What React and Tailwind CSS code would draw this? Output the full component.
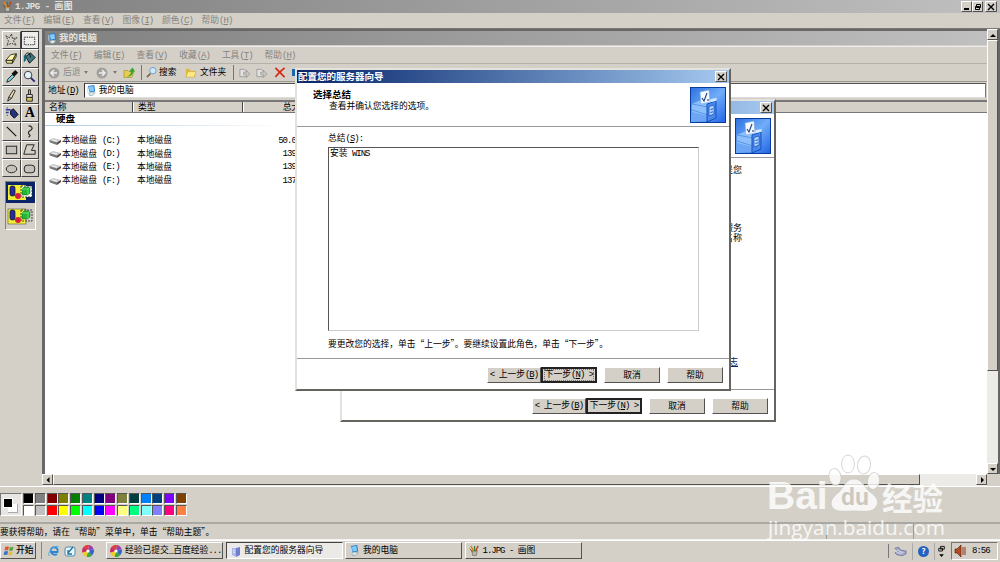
import { Fragment } from "react";
import clsx from "clsx";

const paintMenu = ["文件(&F)", "编辑(&E)", "查看(&V)", "图像(&I)", "颜色(&C)", "帮助(&H)"];
const explorerMenu = ["文件(&F)", "编辑(&E)", "查看(&V)", "收藏(&A)", "工具(&T)", "帮助(&H)"];

const statusText = "要获得帮助\uff0c请在“帮助”菜单中\uff0c单击“帮助主题”。";
const wizardHint = "要更改您的选择\uff0c单击“上一步”。要继续设置此角色\uff0c单击“下一步”。";

const drives = [
    { name: "本地磁盘", letter: "(C:)", size: "50.0 GB" },
    { name: "本地磁盘", letter: "(D:)", size: "139 GB" },
    { name: "本地磁盘", letter: "(E:)", size: "139 GB" },
    { name: "本地磁盘", letter: "(F:)", size: "137 GB" },
];

const swatches = [
    ["#000000", "#808080", "#800000", "#808000", "#008000", "#008080", "#000080", "#800080", "#808040", "#004040", "#0080ff", "#004080", "#8000ff", "#804000"],
    ["#ffffff", "#c0c0c0", "#ff0000", "#ffff00", "#00ff00", "#00ffff", "#0000ff", "#ff00ff", "#ffff80", "#00ff80", "#80ffff", "#8080ff", "#ff0080", "#ff8040"],
];

const raised = "bg-[#d4d0c8] border border-t-white border-l-white border-r-[#55534f] border-b-[#55534f]";

// Latin runs are set in half-width mono, "&" underlines the next letter
const Text = ({ children, className }) => (
    <span className={clsx("whitespace-pre", className)}>
        {children.split(/([\x20-\x7e]+)/).map((part, i) => {
            if (i % 2 === 0) return <Fragment key={i}>{part}</Fragment>;
            const [before, after] = part.split("&");
            return (
                <span key={i} className="font-['Liberation_Mono'] text-[9px] tracking-[-1px]">
                    {before}
                    {after && <><span className="underline">{after[0]}</span>{after.slice(1)}</>}
                </span>
            );
        })}
    </span>
);

const ComputerIcon = ({ className }) => (
    <svg viewBox="0 0 12 12" className={clsx("h-[11px] w-[11px] shrink-0", className)}>
        <path d="M2 1l7-1 1 7-6 1z" fill="#287bd0" />
        <path d="M3 2l5-.8.8 5-4.6.8z" fill="#83ccf7" />
        <path d="M3 9l3-1.5 4 1L7 11.5H4z" fill="#d8e4ee" stroke="#688" strokeWidth=".5" />
        <path d="M2 2v6l2 2" stroke="#bcd9f0" fill="none" />
    </svg>
);

const PaintIcon = ({ className }) => (
    <svg viewBox="0 0 12 12" className={clsx("h-[11px] w-[11px] shrink-0", className)}>
        <path d="M3 6h6l-1 5.5H4z" fill="#b9b8aa" stroke="#555" strokeWidth=".6" />
        <path d="M2 1l3 6" stroke="#d68c18" strokeWidth="1.6" />
        <path d="M6 1v6" stroke="#328449" strokeWidth="1.4" />
        <path d="M10 1L7 7" stroke="#c04525" strokeWidth="1.6" />
        <path d="M1 4l3 4" stroke="#815013" />
    </svg>
);

const ServerIcon = () => (
    <svg viewBox="0 0 12 12" className="h-[12px] w-[12px] shrink-0">
        <path d="M2 3l4-2 4 1v8l-3 2-5-2z" fill="#e4e9fb" />
        <path d="M6 3l4-1v8l-4 2z" fill="#6f7fc9" />
        <path d="M2 3l4 0v9l-4-2z" fill="#aab6ea" />
        <path d="M3 5l2 .4M3 7l2 .4" stroke="#fff" strokeWidth=".7" />
    </svg>
);

const WizardIcon = () => (
    <svg viewBox="0 0 36 36" className="h-9 w-9 shrink-0">
        <defs>
            <linearGradient id="wiz" x1="0" y1="0" x2="1" y2="1">
                <stop offset="0" stopColor="#2c70e0" />
                <stop offset=".5" stopColor="#70adf8" />
                <stop offset="1" stopColor="#2163e6" />
            </linearGradient>
        </defs>
        <rect x=".5" y=".5" width="35" height="35" fill="url(#wiz)" stroke="#073b9c" />
        <path d="M2 17l9-4 10 1-3 4v15L2 29z" fill="#8dbffa" />
        <path d="M2 25l16 4v5H2z" fill="#6ca6f4" />
        <path d="M2 23l16 5M2 17l16 3" stroke="#4a8be8" strokeWidth=".8" fill="none" />
        <path d="M17 17l9-3v17l-9 4z" fill="#4a88ea" stroke="#1250bd" />
        <path d="M17 16l4-4 6-1-1 3z" fill="#d5e9ff" />
        <path d="M19 19.500l5-1.500v9L19 29z" fill="#b4d7ff" stroke="#1a56c4" strokeWidth=".8" />
        <path d="M20.500 22.500l2.500-.7M20.500 25.500l2.500-.7" stroke="#1a56c4" />
        <path d="M10 5l9-2 1 12-9 2z" fill="#f4faff" stroke="#79a9e4" strokeWidth=".6" />
        <path d="M12 11l2 3 3-8M18 12v2" stroke="#24407b" strokeWidth="1.100" fill="none" />
    </svg>
);

const PinwheelIcon = () => (
    <svg viewBox="0 0 12 12" className="h-[12px] w-[12px] shrink-0">
        <path d="M6 6L2 1.500A6 6 0 0 1 7 0z" fill="#e83a30" />
        <path d="M6 6L7 0a6 6 0 0 1 4.500 4z" fill="#9b3fb0" />
        <path d="M6 6l5.500-2A6 6 0 0 1 10 10.500z" fill="#3563c8" />
        <path d="M6 6l4 4.500A6 6 0 0 1 4.500 12z" fill="#37a84a" />
        <path d="M6 6l-1.500 6A6 6 0 0 1 .3 7.500z" fill="#f0cc2a" />
        <path d="M6 6L.3 7.500A6 6 0 0 1 2 1.500z" fill="#c72b58" />
        <circle cx="6" cy="6" r="1.600" fill="#fff" />
    </svg>
);

const DriveIcon = () => (
    <svg viewBox="0 0 12 8" className="h-2 w-3 shrink-0">
        <path d="M0 3l4-2 8 2-4 3z" fill="#c9c9c9" />
        <path d="M0 3l8 2.500V8L1 5.500z" fill="#777" />
        <path d="M8 5.500L12 3v2L8 8z" fill="#4c4c4c" />
        <path d="M3 3l5 1" stroke="#fff" strokeWidth=".8" />
    </svg>
);

const CloseButton = () => (
    <div className={clsx("flex h-[11px] w-[12px] items-center justify-center", raised)}>
        <svg viewBox="0 0 8 8" className="h-[8px] w-[8px]"><path d="M1 1l6 6M7 1L1 7" stroke="#000" strokeWidth="1.400" /></svg>
    </div>
);

const Arrow = ({ dir }) => {
    const paths = { up: "M1 6h6L4 3z", down: "M1 3h6L4 6z", left: "M5.500 1v6L2.500 4z", right: "M3 1v6l3-3z" };
    return (
        <div className={clsx("flex h-[11px] w-[11px] shrink-0 items-center justify-center", raised)}>
            <svg viewBox="0 0 8 8" className="h-2 w-2 shrink-0"><path d={paths[dir]} /></svg>
        </div>
    );
};

const toolIcons = [
    <path key="0" d="M3 4l4 2 2-4 1 5 5-1-4 3 3 5-5-2-5 2 2-4z" fill="none" stroke="#333" strokeDasharray="2 1" />,
    <rect key="1" x="3.500" y="5.500" width="11" height="8" fill="none" stroke="#222" strokeDasharray="1.500 1" />,
    <g key="2" stroke="#222" strokeWidth=".9"><path d="M3 11l5-6 6-1-4 7z" fill="#fff9a8" /><path d="M3 11h7v3H4z" fill="#eadf78" /><path d="M10 11l4-7v3l-4 7z" fill="#c7b83d" /></g>,
    <g key="3"><path d="M5 7l5-4 5 5-6 6z" fill="#3f7880" stroke="#111" /><path d="M4 8c0-6 6-7 6 0" fill="none" stroke="#111" /><path d="M3 6l3-1-1 6-2 2z" fill="#126878" /></g>,
    <g key="4"><path d="M4 15l1-3 5-5 2 2-5 5z" fill="#7fd8dd" stroke="#222" /><path d="M9 6l4-4 3 3-4 4z" fill="#111" /></g>,
    <g key="5"><circle cx="7.500" cy="7.500" r="4" fill="#e3f0f4" stroke="#334" /><path d="M10.500 10.500l4 4" stroke="#222a78" strokeWidth="2" /></g>,
    <path key="6" d="M5 15l1-4 5-8 2 1-4 8zM6 11l3 1" fill="#f3dfad" stroke="#222" />,
    <g key="7" stroke="#222"><path d="M8 3h2v5H8z" fill="#e0cf62" /><path d="M6 8h6v3H6z" fill="#eee" /><path d="M6 11h6v4H6z" fill="#d9c75b" /></g>,
    <g key="8"><path d="M8 6l3-2 5 6-4 4-4-4z" fill="#23357c" stroke="#111" /><path d="M3 5h5M3 8h3M4 11h1M4 3h1" stroke="#2838a8" strokeWidth="1.500" /></g>,
    null,
    <path key="10" d="M4 4l10 10" stroke="#111" strokeWidth="1.200" />,
    <path key="11" d="M8 3c3 0 5 2 3 4S7 9 8 11s3 2 0 4" stroke="#222" fill="none" strokeWidth="1.200" />,
    <rect key="12" x="3.500" y="5.500" width="11" height="8" fill="#c3c1ba" stroke="#222" />,
    <path key="13" d="M3 14l3-10h8l-3 6h4v4z" fill="#d4d0c8" stroke="#222" />,
    <ellipse key="14" cx="9" cy="9.500" rx="5.500" ry="4" fill="#c3c1ba" stroke="#222" />,
    <rect key="15" x="3.500" y="5.500" width="11" height="8" rx="3" fill="#c3c1ba" stroke="#222" />,
];

const ShapesIcon = ({ transparent }) => (
    <svg viewBox="0 0 28 20" className="h-5 w-7">
        <rect x="2" y="3" width="18" height="15" fill="#f4ef35" stroke={transparent ? "#555" : "none"} strokeWidth=".6" />
        <rect x="15" y="4" width="11" height="11" fill={transparent ? "none" : "#f7fff2"} stroke="#222" strokeDasharray="2 1" strokeWidth=".8" />
        <rect x="4" y="4" width="5" height="10" rx="2" fill="#252c9b" stroke="#111" strokeWidth=".7" />
        <path d="M16 7l2-2h6v6l-2 2h-6z" fill="#22b738" stroke="#064b14" strokeWidth=".4" />
        <path d="M16 7h6v6M22 7l2-2" fill="none" stroke="#7df385" strokeWidth=".7" />
        <circle cx="12" cy="14" r="3" fill="#d5213d" />
    </svg>
);

const Toolbox = () => (
    <div className="flex w-[42px] shrink-0 flex-col pt-[2px] pl-[2px]">
        <div className="grid w-[37px] grid-cols-2">
            {toolIcons.map((icon, i) => (
                <div key={i} className={clsx("flex h-[18.3px] items-center justify-center border border-r-[#444] border-b-[#444]", i === 1 ? "border-t-[#333] border-l-[#333] bg-[#efede9]" : "border-t-white border-l-white")}>
                    {i === 9
                        ? <span className="font-['Liberation_Serif'] text-[14px] leading-none font-bold">A</span>
                        : <svg viewBox="0 0 18 18" className="h-[17px] w-[17px] shrink-0">{icon}</svg>}
                </div>
            ))}
        </div>
        <div className="mt-[4px] ml-[3px] flex w-[31px] flex-col items-center border border-t-[#808080] border-l-[#808080] border-r-white border-b-white">
            <div className="h-[21px] w-[29px] bg-[#0a246a]"><ShapesIcon /></div>
            <div className="mt-[3px] h-[23px] w-[29px]"><ShapesIcon transparent /></div>
        </div>
    </div>
);

const ToolDivider = () => <div className="h-[15px] w-px bg-[#77756f]" />;

const NavIcon = ({ flip }) => (
    <svg viewBox="0 0 12 12" className={clsx("h-[12px] w-[12px] shrink-0", flip && "-scale-x-100")}>
        <circle cx="6" cy="6" r="5.500" fill="#a3a19d" /><path d="M9 6H3.500M6 3L3 6l3 3" stroke="#eee" strokeWidth="1.500" fill="none" />
    </svg>
);

const SmallCaret = () => <svg viewBox="0 0 5 4" className="h-[3px] w-[4px] shrink-0"><path d="M0 0h5L2.500 4z" fill="#777" /></svg>;

const ExplorerToolbar = () => (
    <div className="flex h-[18px] items-center border-b border-[#9a9892] pl-[3px]">
        <div className="flex w-[43px] items-center gap-[3px]"><NavIcon /><Text className="text-[#8d8b86]">后退</Text><SmallCaret /></div>
        <div className="ml-[5px] flex w-[28px] items-center gap-[5px]"><NavIcon flip /><SmallCaret /></div>
        <svg viewBox="0 0 12 12" className="-ml-px h-[13px] w-[12px] shrink-0">
            <path d="M1 4h4l1 1h5l-2 6H1z" fill="#e6cd52" stroke="#a2892c" strokeWidth=".6" /><path d="M4 10c3-1 4-3 4-5H6l3.500-4L12 5h-2c0 3-2 5-6 5z" fill="#36a32d" />
        </svg>
        <div className="ml-[6px] flex w-[42px] items-center gap-[4px]">
            <ToolDivider />
            <svg viewBox="0 0 12 12" className="h-[13px] w-[11px] shrink-0"><path d="M1 11l4-4" stroke="#86623c" strokeWidth="1.700" /><circle cx="7.500" cy="4" r="3.500" fill="#d0eafa" stroke="#6799c4" /></svg>
            <Text className="-ml-[2px]">搜索</Text>
        </div>
        <div className="ml-[2px] flex w-[43px] items-center gap-[3px]">
            <svg viewBox="0 0 13 12" className="h-[11px] w-[12px] shrink-0"><path d="M1 2h4l1 2h5v7H1z" fill="#dfb941" /><path d="M3 5h9l-2 6H1z" fill="#ffe985" stroke="#b99731" strokeWidth=".5" /></svg>
            <Text>文件夹</Text>
        </div>
        <div className="ml-[5px] flex items-center">
            <ToolDivider />
            {[0, 1].map((n) => (
                <svg key={n} viewBox="0 0 13 12" className="ml-[5px] h-[12px] w-[12px] shrink-0"><path d="M1 2h5l2 2v6H1z" fill="#e5e3df" stroke="#999" /><path d="M5 5h3V3l4 4-4 4V8H5z" fill="#c6c4c0" stroke="#999" strokeWidth=".8" /></svg>
            ))}
            <svg viewBox="0 0 12 12" className="ml-[6px] h-[11px] w-[12px] shrink-0"><path d="M1 1l10 10M11 1C7 4 4 7 1 11" stroke="#d42b16" strokeWidth="1.900" /></svg>
            <div className="ml-[6px] h-[7px] w-[5px] bg-[#1d65ac]" />
        </div>
    </div>
);

const Explorer = () => (
    <div className="flex min-w-0 flex-1 flex-col overflow-hidden border-t-2 border-l-[3px] border-[#686868] bg-[#d4d0c8]">
        <div className="flex h-[14px] shrink-0 items-center gap-[1px] bg-linear-to-r from-[#808080] to-[#c0c0c0] pl-[2px]">
            <ComputerIcon />
            <Text className="text-[9.500px] font-bold text-[#e4e2de]">我的电脑</Text>
        </div>
        <div className="mt-px flex h-[18px] shrink-0 items-center gap-[12px] border-t border-b border-t-[#eee] border-b-[#b5b2ab] pt-px pl-[6px] text-[#85837e]">
            {explorerMenu.map((label) => <Text key={label}>{label}</Text>)}
        </div>
        <ExplorerToolbar />
        <div className="flex h-[17px] shrink-0 items-center pr-[1px] pl-[3px]">
            <Text>地址(&D)</Text>
            <div className="ml-[5px] flex h-[15px] flex-1 items-center gap-[2px] border border-t-[#555] border-l-[#333] border-r-[#777] border-b-[#ddd] bg-white pl-[1px]">
                <ComputerIcon />
                <Text>我的电脑</Text>
            </div>
        </div>
        <div className="mt-px flex h-[13px] shrink-0 items-center border-t-2 border-b border-t-[#777] border-b-[#777]">
            <div className="flex h-full w-[88px] items-center border-r border-[#444] pl-[4px]"><Text>名称</Text></div>
            <div className="flex h-full w-[110px] items-center border-r border-l border-r-[#444] border-l-white pl-[4px]"><Text>类型</Text></div>
            <div className="flex h-full w-[66px] items-center justify-end border-l border-white"><Text>总大小</Text></div>
        </div>
        <div className="flex min-h-0 flex-1 flex-col bg-white">
            <Text className="h-[12px] pl-[11px] text-[9.500px] leading-[11px] font-bold">硬盘</Text>
            <div className="h-px w-[240px] shrink-0 bg-linear-to-r from-[#aac8e0] to-white" />
            <div className="mt-[8px]">
                {drives.map((drive) => (
                    <div key={drive.letter} className="flex h-[13.300px] items-center pl-[4px]">
                        <DriveIcon />
                        <Text className="w-[41px] pl-[1px]">{drive.name}</Text>
                        <Text className="w-[35px]">{drive.letter}</Text>
                        <Text className="w-[86px]">本地磁盘</Text>
                        <Text className="w-[86px] text-right">{drive.size}</Text>
                    </div>
                ))}
            </div>
        </div>
    </div>
);

const DialogButton = ({ label, active, className }) => (
    <div className={clsx("flex h-[16px] items-center justify-center", active ? "border-2 border-[#222] bg-[#d4d0c8]" : raised, className)}>
        <Text className={active === "focus" ? "outline-1 outline-dotted outline-[#777]" : ""}>{label}</Text>
    </div>
);

const Wizard = ({ className, title, children, focused, header }) => (
    <div className={clsx("absolute flex h-[323px] w-[436px] flex-col border-t-2 border-r-2 border-b-2 border-l-2 border-t-[#e4e2dd] border-l-[#e4e2dd] border-r-[#66645f] border-b-[#66645f] bg-white", className)}>
        <div className="flex h-[13px] shrink-0 items-center justify-between bg-linear-to-r from-[#0a246a] to-[#a6caf0] pr-[2px] pl-[1px]">
            {title ? <Text className="text-[9.500px] font-bold text-white">{title}</Text> : <span />}
            <CloseButton />
        </div>
        <div className="flex h-[44px] shrink-0 items-start justify-between border-b border-[#999] pt-[4px] pr-[3px] pl-[16px]">
            <div className="flex flex-col pt-[3px]">{header}</div>
            <WizardIcon />
        </div>
        <div className="flex min-h-0 flex-1 flex-col">{children}</div>
        <div className="flex h-[31px] shrink-0 items-center justify-end border-t border-[#999] pt-[2px] pr-[6px]">
            <DialogButton label="< 上一步(&B)" className="w-[54px]" />
            <DialogButton label="下一步(&N) >" active={focused ? "focus" : "default"} className="w-[56px]" />
            <DialogButton label="取消" className="ml-[7px] w-[56px]" />
            <DialogButton label="帮助" className="ml-[7px] w-[56px]" />
        </div>
    </div>
);

const TaskButton = ({ icon, label, pressed }) => (
    <div className={clsx("flex h-[17px] w-[117px] items-center gap-[3px] pl-[3px]", pressed ? "border border-t-[#444] border-l-[#444] border-r-white border-b-white bg-[#eceae6]" : raised)}>
        {icon}
        <Text>{label}</Text>
    </div>
);

const Taskbar = () => (
    <div className="flex h-[22px] items-start border-t border-white bg-[#d4d0c8] pt-px">
        <div className={clsx("flex h-[17px] w-[36px] items-center gap-[1px] pl-[2px]", raised)}>
            <svg viewBox="0 0 12 12" className="h-[11px] w-[12px] shrink-0">
                <path d="M2 2q2-1 4 0L5 6q-2-1-4 0z" fill="#df5a2b" /><path d="M7 2q2 1 4 0l-1 4q-2 1-4 0z" fill="#58a63f" />
                <path d="M1 7q2-1 4 0l-1 4q-2-1-4 0z" fill="#3c6fc9" /><path d="M6 7q2 1 4 0l-1 4q-2 1-4 0z" fill="#e9bd34" />
            </svg>
            <Text className="font-medium">开始</Text>
        </div>
        <div className="ml-[5px] flex h-[17px] w-[65px] items-center gap-[4px] border-l border-[#888] pl-[6px]">
            <svg viewBox="0 0 12 12" className="h-[12px] w-[12px] shrink-0"><path d="M9.500 7H3a3.500 3.500 0 1 1 6.500 0zM9 9a4 4 0 0 1-6-2" fill="none" stroke="#2d86ce" strokeWidth="1.900" /><path d="M1 11C-1 6 8-1 11 2" fill="none" stroke="#5caee5" /></svg>
            <svg viewBox="0 0 12 12" className="h-[12px] w-[12px] shrink-0"><rect x="1" y="2" width="10" height="9" rx="2" fill="#e8f5fb" stroke="#4d8caf" /><path d="M4 8l5-6M4 5v4h4" fill="none" stroke="#24749b" strokeWidth="1.300" /></svg>
            <div className="ml-[2px]"><PinwheelIcon /></div>
        </div>
        <div className="flex gap-[2.500px]">
            <TaskButton icon={<PinwheelIcon />} label="经验已提交_百度经验..." />
            <TaskButton icon={<ServerIcon />} label="配置您的服务器向导" pressed />
            <TaskButton icon={<ComputerIcon />} label="我的电脑" />
            <TaskButton icon={<PaintIcon />} label="1.JPG - 画图" />
        </div>
        <div className="mr-[2px] ml-auto flex h-[18px] items-center">
            <div className="h-[14px] w-px bg-[#777]" />
            <svg viewBox="0 0 14 12" className="mx-[5px] h-[12px] w-[13px]"><path d="M1 3l4-1 2 3 6 1v3l-4 2-6-1-2-2 4-1z" fill="#a5accb" stroke="#555e88" strokeWidth=".7" /><path d="M3 5l7 3M2 7l6 2" stroke="#eef" strokeWidth=".7" /></svg>
            <div className="h-[17px] w-px bg-[#aaa]" />
            <div className="mx-[5px] flex h-[11px] w-[11px] items-center justify-center rounded-full bg-[#2562bf] text-[8px] font-bold text-white">?</div>
            <div className="h-[17px] w-px bg-[#aaa]" />
            <svg viewBox="0 0 8 14" className="mr-[5px] ml-[3px] h-[13px] w-[8px]"><path d="M2.500 1.500h4v3h-4zM.5 3.500h4v3h-4z" fill="#d4d0c8" stroke="#111" /><path d="M1 10h5L3.500 13z" /></svg>
            <div className="flex h-[18px] w-[47px] items-center gap-[6px] border border-t-[#777] border-l-[#777] border-r-white border-b-white pl-[2px]">
                <svg viewBox="0 0 12 12" className="h-[12px] w-[12px] shrink-0"><path d="M1 4h2l4-4v12L3 8H1z" fill="#b44b22" stroke="#421a0b" strokeWidth=".6" /><path d="M9 2v8M11 2v8" stroke="#8d3419" /></svg>
                <Text>8:56</Text>
            </div>
        </div>
    </div>
);

const Watermark = () => (
    <div className="absolute top-[454px] left-[766px] h-[88px] w-[182px] text-white/80">
        <svg viewBox="0 0 182 88" className="absolute inset-0 h-full w-full" fill="#fff" fillOpacity=".8" stroke="#c8c6c1" strokeOpacity=".7" strokeWidth="1">
            <ellipse cx="69" cy="23" rx="6" ry="8.500" transform="rotate(-10 69 23)" />
            <ellipse cx="82" cy="10" rx="6.500" ry="9" />
            <ellipse cx="98" cy="11" rx="6.500" ry="9" transform="rotate(8 98 11)" />
            <ellipse cx="107.500" cy="27" rx="6" ry="8.500" transform="rotate(10 107.500 27)" />
            <path d="M88 25c8 0 10 8 16 13 6 4 10 9 6 15-4 6-13 4-22 4s-18 2-22-4c-3-6 2-11 7-15 5-5 7-13 15-13z" />
        </svg>
        <span className="absolute top-[21px] left-[1px] font-['Liberation_Sans'] text-[39px] leading-[42px] font-bold">Bai</span>
        <span className="absolute top-[29px] left-[75px] font-['Liberation_Sans'] text-[23px] leading-[28px] font-bold text-[#cbc8c1]">du</span>
        <span className="absolute top-[28px] left-[116px] text-[30.500px] leading-[30px] font-bold">经验</span>
        <span className="absolute top-[62px] left-[2px] font-['Open_Sans'] text-[20.800px] leading-[22px] whitespace-nowrap">jingyan.baidu.com</span>
    </div>
);

export default function App() {
    return (
        <div className="relative flex h-[562px] w-[1000px] flex-col overflow-hidden bg-[#d4d0c8] font-['Noto_Sans_CJK_SC',sans-serif] text-[8.750px] leading-none text-black">
            <div className="flex h-[13px] shrink-0 items-center gap-[2px] bg-linear-to-r from-[#808080] to-[#c0c0c0] pl-[2px]">
                <PaintIcon />
                <Text className="font-bold tracking-[0.500px] text-[#e4e2de] [&>span]:tracking-[-0.450px]">1.JPG - 画图</Text>
                <div className="ml-auto flex pr-[3px]">
                    <div className={clsx("flex h-[11px] w-[11px] items-end pb-px pl-[2px]", raised)}><div className="h-[2px] w-[5px] bg-black" /></div>
                    <div className={clsx("mr-[2px] flex h-[11px] w-[11px] items-center justify-center", raised)}>
                        <svg viewBox="0 0 8 8" className="h-2 w-2 shrink-0"><path d="M2.500 1.500h4v3h-4zM1.500 3.500h4v3h-4z" fill="#d4d0c8" stroke="#000" /></svg>
                    </div>
                    <CloseButton />
                </div>
            </div>
            <div className="flex h-[15px] shrink-0 items-center gap-[8.800px] pl-[4px] text-[#85837e]">
                {paintMenu.map((label) => <Text key={label}>{label}</Text>)}
            </div>

            <div className="flex h-[458px] shrink-0 border-t border-[#777]">
                <Toolbox />
                <div className="flex min-w-0 flex-1 flex-col">
                    <div className="flex min-h-0 flex-1">
                        <Explorer />
                        <div className="flex w-[11px] shrink-0 flex-col bg-[#ecebe7]">
                            <Arrow dir="up" />
                            <div className={clsx("h-[331px]", raised)} />
                            <div className="flex-1" />
                            <Arrow dir="down" />
                        </div>
                        <div className="w-[2px] shrink-0 bg-[#666]" />
                    </div>
                    <div className="flex h-[12px] shrink-0 bg-[#ecebe7]">
                        <Arrow dir="left" />
                        <div className={clsx("h-[11px] w-[867px]", raised)} />
                        <div className="flex-1" />
                        <Arrow dir="right" />
                        <div className="w-[13px] bg-[#d4d0c8]" />
                    </div>
                </div>
            </div>

            <div className="flex h-[36px] shrink-0 items-start border-t border-white pt-[6px]">
                <div className="flex h-[23px] w-[22px] shrink-0 border border-t-[#777] border-l-[#777] border-r-white border-b-white bg-[#e8e6e2] pt-[4px] pl-[2px]">
                    <div className="z-10 h-[10px] w-[10px] shrink-0 border border-white bg-black" />
                    <div className="mt-[6px] -ml-[5px] h-[9px] w-[10px] border-r border-b border-[#aaa] bg-white" />
                </div>
                <div className="ml-px flex flex-col gap-px">
                    {swatches.map((row, r) => (
                        <div key={r} className="flex gap-[0.750px]">
                            {row.map((color) => (
                                <div key={color} className="h-[11px] w-[11px] border border-t-[#555] border-l-[#555] border-r-white border-b-white" style={{ backgroundColor: color }} />
                            ))}
                        </div>
                    ))}
                </div>
            </div>

            <div className="flex h-[18px] shrink-0 items-stretch border-t-2 border-b border-t-[#aaa8a2] border-b-[#f4f3f0]">
                <div className="flex w-[827px] items-center border-r border-[#999] pt-px"><Text>{statusText}</Text></div>
                <div className="w-[87px] border-r border-[#999]" />
            </div>
            <Taskbar />

            <Wizard title="" className="top-[99px] left-[340px]">
                <div className="flex flex-col items-end pr-[32px] text-[9px]">
                    <Text className="mt-[7px]">是您</Text>
                    <Text className="mt-[49px]">服务</Text>
                    <Text className="mt-px">名称</Text>
                    <Text className="mt-[115px] mr-[4px] text-[#0a246a] underline">日志</Text>
                </div>
            </Wizard>

            <Wizard
                title="配置您的服务器向导"
                focused
                className="top-[68px] left-[295px]"
                header={
                    <>
                        <Text className="text-[9.500px] font-bold">选择总结</Text>
                        <Text className="mt-[2px] pl-[16px]">查看并确认您选择的选项。</Text>
                    </>
                }
            >
                <div className="flex flex-col pt-[7px] pl-[31px]">
                    <Text>总结(&S):</Text>
                    <div className="mt-[3px] h-[184px] w-[371px] border border-t-[#555] border-l-[#555] border-r-[#ccc] border-b-[#ccc] pt-[1px] pl-[1px]">
                        <Text>安装 WINS</Text>
                    </div>
                    <Text className="mt-[9px]">{wizardHint}</Text>
                </div>
            </Wizard>
            <Watermark />
        </div>
    );
}
